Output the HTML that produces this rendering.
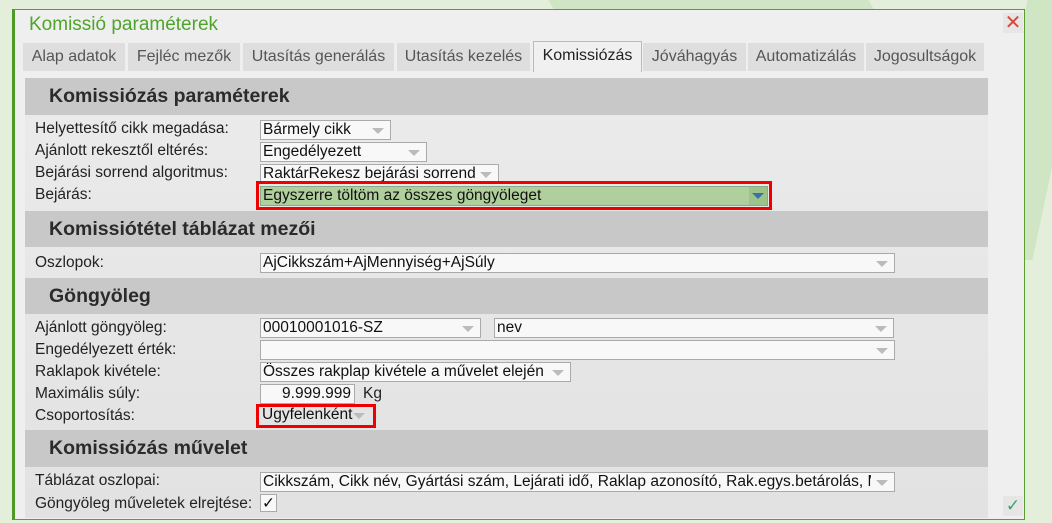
<!DOCTYPE html>
<html><head><meta charset="utf-8"><style>
*{margin:0;padding:0;box-sizing:border-box}
body{width:1052px;height:523px;overflow:hidden;background:#e3eedb;font-family:"Liberation Sans",sans-serif;position:relative}
.bg1{position:absolute;left:560px;top:-40px;width:320px;height:120px;background:#cfe5c3;transform:skewX(30deg)}
.bg2{position:absolute;left:1000px;top:0;width:60px;height:260px;background:#cfe5c3;transform:skewX(-12deg)}
.dlg{position:absolute;left:12px;top:9px;width:1013px;height:511px;background:#efefef;border:1px solid #5a9e2e;border-left:3px solid #4e9a26}
.title{position:absolute;left:14px;top:4px;font-size:19px;color:#4ea52a}
.x{position:absolute;left:988px;top:3px;width:20px;height:20px;background:#e6e6e6;color:#d9493a;font-size:20px;text-align:center;line-height:20px}
.tab{position:absolute;top:33px;height:28px;background:#dedede;color:#555;font-size:16px;line-height:28px;text-align:center;white-space:nowrap}
.tab.a{top:31px;height:31px;background:#f0f0f0;border:1px solid #bbb;border-bottom:none;color:#222}
.area{position:absolute;left:10px;top:68px;width:963px;height:440px;background:linear-gradient(#ebebeb,#e2e2e2)}
.h{position:absolute;left:10px;width:963px;background:#c8c8c8;font-weight:bold;font-size:19.5px;color:#2b2b2b;padding-left:24px}
.l{position:absolute;left:20px;font-size:15.5px;color:#222;white-space:nowrap}
.i{position:absolute;height:20px;background:#f8f8f8;border:1px solid #aaa;font-size:15.5px;line-height:18px;padding-left:2px;color:#111;white-space:nowrap;overflow:hidden}
.dd::after{content:"";position:absolute;right:6px;top:7px;border:6px solid transparent;border-top:6px solid #bbb;border-bottom:none}
.red{position:absolute;border:3px solid #e00}
</style></head><body>
<div class="bg1"></div><div class="bg2"></div>
<div class="dlg">
<div class="title">Komissió paraméterek</div>
<div class="x">✕</div>
<div class="tab" style="left:8px;width:102px">Alap adatok</div>
<div class="tab" style="left:113px;width:112px">Fejléc mezők</div>
<div class="tab" style="left:228px;width:151px">Utasítás generálás</div>
<div class="tab" style="left:382px;width:133px">Utasítás kezelés</div>
<div class="tab a" style="left:518px;width:109px">Komissiózás</div>
<div class="tab" style="left:628px;width:103px">Jóváhagyás</div>
<div class="tab" style="left:733px;width:116px">Automatizálás</div>
<div class="tab" style="left:851px;width:118px">Jogosultságok</div>
<div class="area"></div>
<div class="h" style="top:68px;height:37px;line-height:37px">Komissiózás paraméterek</div>
<div class="l" style="top:110px">Helyettesítő cikk megadása:</div>
<div class="l" style="top:132px">Ajánlott rekesztől eltérés:</div>
<div class="l" style="top:154px">Bejárási sorrend algoritmus:</div>
<div class="l" style="top:176px">Bejárás:</div>
<div class="i dd" style="left:245px;top:110px;width:131px">Bármely cikk</div>
<div class="i dd" style="left:245px;top:132px;width:167px">Engedélyezett</div>
<div class="i dd" style="left:245px;top:154px;width:239px">RaktárRekesz bejárási sorrend</div>
<div class="i" style="left:245px;top:176px;width:508px;background:#afcf9d;border-color:#8a8">Egyszerre töltöm az összes göngyöleget<span style="position:absolute;right:0;top:0;width:18px;height:18px;background:#9cc48a"><span style="position:absolute;left:3px;top:6px;border:6px solid transparent;border-top:6px solid #3b6fb0;border-bottom:none"></span></span></div>
<div class="red" style="left:241px;top:171px;width:516px;height:29px"></div>
<div class="h" style="top:201px;height:36px;line-height:36px">Komissiótétel táblázat mezői</div>
<div class="l" style="top:244px">Oszlopok:</div>
<div class="i dd" style="left:245px;top:243px;width:635px">AjCikkszám+AjMennyiség+AjSúly</div>
<div class="h" style="top:268px;height:36px;line-height:36px">Göngyöleg</div>
<div class="l" style="top:309px">Ajánlott göngyöleg:</div>
<div class="l" style="top:331px">Engedélyezett érték:</div>
<div class="l" style="top:353px">Raklapok kivétele:</div>
<div class="l" style="top:375px">Maximális súly:</div>
<div class="l" style="top:397px">Csoportosítás:</div>
<div class="i dd" style="left:245px;top:308px;width:221px">00010001016-SZ</div>
<div class="i dd" style="left:479px;top:308px;width:400px">nev</div>
<div class="i dd" style="left:245px;top:330px;width:635px"></div>
<div class="i dd" style="left:245px;top:352px;width:311px">Összes rakplap kivétele a művelet elején</div>
<div class="i" style="left:245px;top:374px;width:95px;text-align:right;padding-right:3px">9.999.999</div>
<div class="l" style="left:348px;top:375px">Kg</div>
<div class="i dd" style="left:245px;top:396px;width:111px;border:none;background:transparent">Ügyfelenként</div>
<div class="red" style="left:241px;top:394px;width:120px;height:24px"></div>
<div class="h" style="top:420px;height:37px;line-height:37px">Komissiózás művelet</div>
<div class="l" style="top:462px">Táblázat oszlopai:</div>
<div class="l" style="top:485px">Göngyöleg műveletek elrejtése:</div>
<div class="i dd" style="left:245px;top:462px;width:635px"><div style="width:608px;overflow:hidden">Cikkszám, Cikk név, Gyártási szám, Lejárati idő, Raklap azonosító, Rak.egys.betárolás, Megjegyzés</div></div>
<div class="i" style="left:245px;top:484px;width:17px;height:18px;text-align:center;padding:0">✓</div>
<div style="position:absolute;left:988px;top:486px;width:20px;height:20px;background:#e6e6e6;color:#3aa36a;font-size:17px;text-align:center">✓</div>
</div>
</body></html>
